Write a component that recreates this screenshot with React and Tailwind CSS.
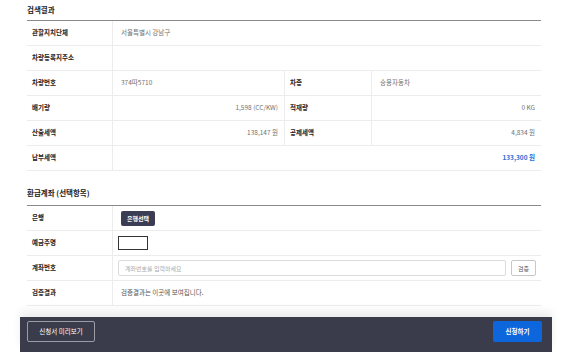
const font = { fontFamily: '"Noto Sans CJK KR", "Noto Sans", sans-serif' };

function Row({ children }) {
  return <div className="flex h-[25px] border-b border-[#ececec]">{children}</div>;
}

function Label({ children, w = "w-[86px]" }) {
  return (
    <div className={`${w} shrink-0 flex items-center pl-[5px] border-r border-[#ececec] text-[6.5px] font-bold text-[#222]`}>
      {children}
    </div>
  );
}

function Value({ children, w = "flex-1", right, color = "text-[#6f6f6f]" }) {
  return (
    <div
      className={`${w} flex items-center px-[8px] text-[6.5px] ${color} ${right ? "justify-end pr-[6px]" : ""}`}
    >
      {children}
    </div>
  );
}

export default function App() {
  return (
    <div className="bg-white w-[567px] h-[352px] overflow-hidden flex flex-col" style={font}>
      <div className="ml-[20px] w-[532px] flex-1 pl-[7px] pr-[11px]">
        <div className="h-[20px] flex items-center text-[7.5px] font-bold text-[#222]">검색결과</div>
        <div className="border-t border-[#8a8a8a]">
          <Row>
            <Label>관할지치단체</Label>
            <Value>서울특별시 강남구</Value>
          </Row>
          <Row>
            <Label>차량등록지주소</Label>
            <Value />
          </Row>
          <Row>
            <Label>차량번호</Label>
            <Value w="w-[172px] border-r border-[#ececec]">374따5710</Value>
            <Label w="w-[87px]">차종</Label>
            <Value>승용자동차</Value>
          </Row>
          <Row>
            <Label>배기량</Label>
            <Value w="w-[172px] border-r border-[#ececec]" right>1,598 (CC/KW)</Value>
            <Label w="w-[87px]">적재량</Label>
            <Value right>0 KG</Value>
          </Row>
          <Row>
            <Label>산출세액</Label>
            <Value w="w-[172px] border-r border-[#ececec]" right>138,147 원</Value>
            <Label w="w-[87px]">공제세액</Label>
            <Value right>4,834 원</Value>
          </Row>
          <Row>
            <Label>납부세액</Label>
            <Value right color="text-[#1f6fd6] font-bold">133,300 원</Value>
          </Row>
        </div>

        <div className="pt-[12px]">
          <div className="h-[20px] flex items-center text-[7.5px] font-bold text-[#222]">환급계좌 (선택항목)</div>
          <div className="mt-[2px] border-t border-[#8a8a8a]">
            <Row>
              <Label>은행</Label>
              <Value>
                <button className="h-[15px] px-[6px] rounded-[2px] bg-[#3b3d55] text-white text-[6px] font-bold">
                  은행선택
                </button>
              </Value>
            </Row>
            <Row>
              <Label>예금주명</Label>
              <div className="flex-1 flex items-center pl-[5px]">
                <div className="w-[30px] h-[14px] border-[1.5px] border-[#333] bg-white" />
              </div>
            </Row>
            <Row>
              <Label>계좌번호</Label>
              <div className="flex-1 flex items-center pl-[5px] pr-[5px] gap-[5px]">
                <div className="flex-1 h-[16px] border border-[#dcdcdc] rounded-[2px] flex items-center pl-[6px] text-[6px] text-[#aaa]">
                  계좌번호를 입력하세요
                </div>
                <button className="w-[25px] h-[16px] border border-[#c8c8c8] rounded-[2px] bg-white text-[6px] text-[#555]">
                  검증
                </button>
              </div>
            </Row>
            <Row>
              <Label>검증결과</Label>
              <Value color="text-[#555]">검증결과는 이곳에 보여집니다.</Value>
            </Row>
          </div>
        </div>
      </div>

      <div className="ml-[20px] w-[532px] h-[35px] shrink-0 bg-[#3a3c4b] shadow-[0_-6px_8px_rgba(0,0,0,0.07)] flex items-start justify-between pt-[4px] pl-[7px] pr-[10px]">
        <button className="w-[68px] h-[21px] border border-[#9a9ca6] rounded-[2px] text-white text-[6.5px]">
          신청서 미리보기
        </button>
        <button className="w-[49px] h-[21px] bg-[#0d66dc] rounded-[2px] text-white text-[6.5px] font-bold">
          신청하기
        </button>
      </div>
    </div>
  );
}
